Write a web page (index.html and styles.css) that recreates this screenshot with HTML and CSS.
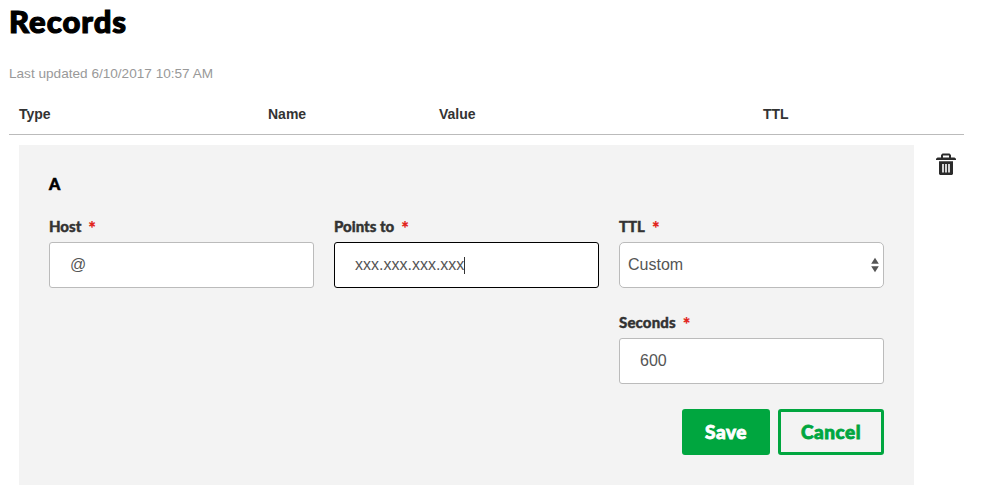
FILE: index.html
```html
<!DOCTYPE html>
<html lang="en">
<head>
<meta charset="utf-8">
<title>Records</title>
<link rel="stylesheet" href="styles.css">
</head>
<body>
<main class="records">
  <h1 class="title">Records</h1>
  <p class="updated">Last updated 6/10/2017 10:57 AM</p>
  <div class="columns">
    <span>Type</span><span>Name</span><span>Value</span><span>TTL</span>
  </div>
  <div class="record">
    <section class="editor">
      <h2 class="record-type">A</h2>
      <div class="fields">
        <div class="field">
          <div class="label">Host<span class="required">*</span></div>
          <div class="input">@</div>
        </div>
        <div class="field">
          <div class="label">Points to<span class="required">*</span></div>
          <div class="input focused">xxx.xxx.xxx.xxx<span class="caret"></span></div>
        </div>
        <div class="field">
          <div class="label">TTL<span class="required">*</span></div>
          <div class="input select">Custom
            <svg class="arrows" width="8" height="16" viewBox="0 0 8 16"><path d="M4 0.8 7.8 6.8H0.2zM4 15.2 7.8 9.2H0.2z" fill="#555"/></svg>
          </div>
        </div>
        <div class="field field-seconds">
          <div class="label label-seconds">Seconds<span class="required">*</span></div>
          <div class="input">600</div>
        </div>
      </div>
      <div class="actions">
        <button class="button save">Save</button>
        <button class="button cancel">Cancel</button>
      </div>
    </section>
    <svg class="trash" width="20" height="23" viewBox="0 0 20 23">
      <path d="M5 4.500V2L6.500.5h7L15 2v2.500h3.500L20 5.800V7H0V5.800L1.500 4.500zM7 4.500h6V2.500H7z" fill="#2b2b2b" fill-rule="evenodd"/>
      <path d="M3 8.300h14V21l-1 1H4l-1-1z" fill="#2b2b2b"/>
      <path d="M7 11v8.500M10 11v8.500M13 11v8.500" stroke="#dedede" stroke-width="1.900"/>
    </svg>
  </div>
</main>
</body>
</html>
```

FILE: styles.css
```css
* { box-sizing: border-box; }
body {
  margin: 0;
  background: #fff;
  color: #333;
  font-family: "Liberation Sans", Arial, sans-serif;
}
.records { width: 955px; margin-left: 9px; }
.title {
  margin: 0;
  padding-top: 2px;
  height: 64px;
  font: 900 31px/38px Lato, sans-serif;
  letter-spacing: 1px;
  color: #000;
  -webkit-text-stroke: 1.2px #000;
}
.updated {
  margin: 0;
  height: 30px;
  font-size: 13.6px;
  line-height: 20px;
  color: #999;
}
.columns {
  display: grid;
  grid-template-columns: 249px 171px 324px 1fr;
  height: 41px;
  padding-left: 10px;
  border-bottom: 1px solid #bbb;
  font-size: 14px;
  font-weight: bold;
  line-height: 40px;
}
.record {
  display: flex;
  align-items: flex-start;
  gap: 22px;
  padding: 10px 0 0 10px;
}
.editor {
  flex: none;
  width: 895px;
  height: 340px;
  padding: 29px 30px 30px;
  background: #f3f3f3;
}
.record-type {
  margin: 0;
  height: 41px;
  font: 900 16px/19px Lato, sans-serif;
  color: #000;
  -webkit-text-stroke: 0.6px #000;
}
.fields {
  display: grid;
  grid-template-columns: repeat(3, 265px);
  gap: 23px 20px;
}
.field-seconds { grid-column: 3; }
.label {
  display: flex;
  gap: 7px;
  height: 27px;
  font: 900 15px/22px Lato, sans-serif;
  color: #333;
  -webkit-text-stroke: 0.4px #333;
}
.label-seconds { letter-spacing: 0.15px; }
.required {
  padding-top: 2px;
  font-size: 18px;
  color: #e2231a;
  -webkit-text-stroke: 0.2px #e2231a;
}
.input {
  display: flex;
  align-items: center;
  height: 46px;
  padding: 0 20px;
  border: 1px solid #bbb;
  border-radius: 3px;
  background: #fff;
  color: #555;
  font-size: 16px;
}
.focused { border-color: #000; }
.caret { width: 1px; height: 17px; background: #333; }
.select {
  justify-content: space-between;
  padding: 0 4px 0 8px;
  border-radius: 5px;
}
.actions {
  display: flex;
  justify-content: flex-end;
  gap: 8px;
  margin-top: 25px;
}
.button {
  height: 46px;
  padding: 0;
  border: 3px solid #00a63f;
  border-radius: 3px;
  font: 900 19px/38px Lato, sans-serif;
  letter-spacing: 0.5px;
}
.save {
  width: 88px;
  background: #00a63f;
  color: #fff;
  -webkit-text-stroke: 0.8px #fff;
}
.cancel {
  width: 106px;
  background: transparent;
  color: #00a63f;
  -webkit-text-stroke: 0.8px #00a63f;
}
.trash { flex: none; margin-top: 8px; }
```
